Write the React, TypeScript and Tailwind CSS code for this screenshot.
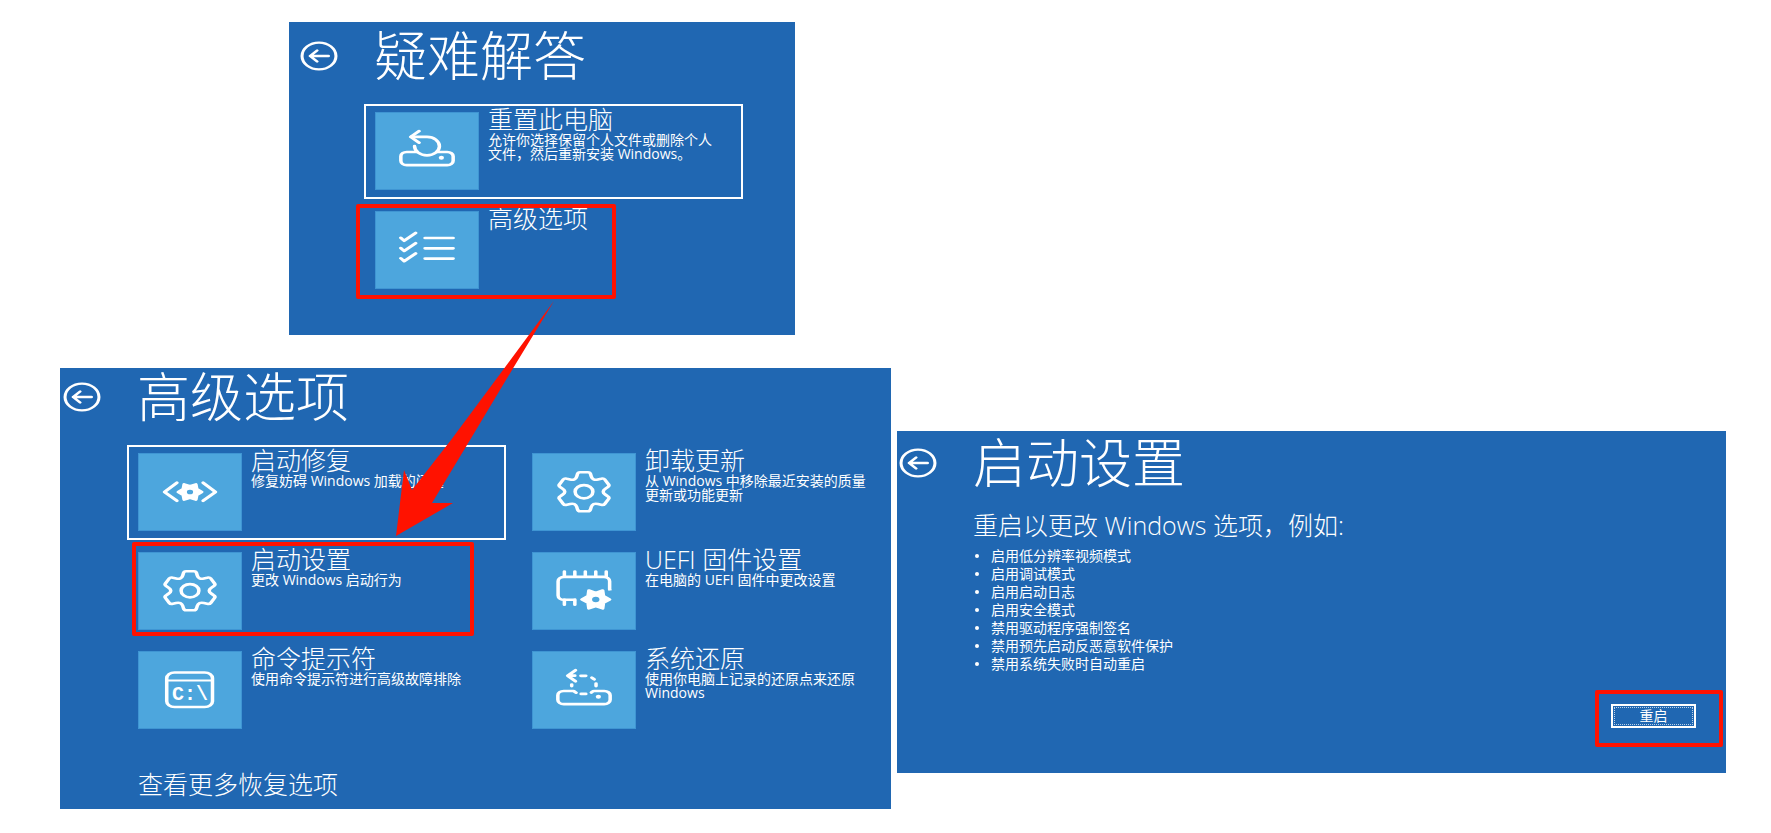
import type { ReactNode } from 'react';

interface TileProps {
  title: string;
  description?: string;
  icon: ReactNode;
  selected?: boolean;
  children?: ReactNode;
}

interface PanelHeaderProps {
  title: string;
}

// Outline of a six-tooth gear with rounded corners
const gearOutline = (cx: number, cy: number) => {
  const at = (x: number, y: number, turn: number) => {
    const a = (turn * Math.PI) / 3;
    const px = cx + x * Math.cos(a) - y * Math.sin(a);
    const py = cy + x * Math.sin(a) + y * Math.cos(a);
    return `${px.toFixed(2)} ${py.toFixed(2)}`;
  };
  let d = `M${at(-3, -20, 0)}`;
  for (let i = 0; i < 6; i++) {
    d += `L${at(3, -20, i)}Q${at(4.7, -20, i)} ${at(5, -18, i)}`;
    d += `L${at(5.6, -15.5, i)}Q${at(6.6, -11.4, i)} ${at(-5.6, -15.5, i + 1)}`;
    d += `L${at(-5, -18, i + 1)}Q${at(-4.7, -20, i + 1)} ${at(-3, -20, i + 1)}`;
  }
  return `${d}Z`;
};

// Solid star-like gear, teeth pointing sideways
const gearPoints = (cx: number, cy: number, outer: number, inner: number) =>
  Array.from({ length: 12 }, (_, i) => {
    const a = (i * Math.PI) / 6;
    const r = i % 2 === 0 ? outer : inner;
    return `${(cx + r * Math.cos(a)).toFixed(2)},${(cy + r * Math.sin(a)).toFixed(2)}`;
  }).join(' ');

const IconCanvas = ({ children }: { children: ReactNode }) => (
  <svg
    viewBox="0 0 78 78"
    preserveAspectRatio="none"
    className="h-full w-full"
    fill="none"
    stroke="white"
    strokeWidth="2.7"
    strokeLinecap="round"
    strokeLinejoin="round"
    aria-hidden="true"
  >
    {children}
  </svg>
);

const DRIVE_PATH =
  'M47 40H54.5A4.5 4.5 0 0 1 59 44.5V49A4.5 4.5 0 0 1 54.5 53.5H23.5A4.5 4.5 0 0 1 19 49V44.5A4.5 4.5 0 0 1 23.5 40H31';

const ResetIcon = () => (
  <IconCanvas>
    <path d={DRIVE_PATH} />
    <path d="M27 24.5H39A9.5 9.5 0 1 1 29.5 34" />
    <path d="M33 18.5L26.5 24.5L33 30.5" />
    <circle cx="50" cy="46" r="2" fill="white" stroke="none" />
  </IconCanvas>
);

const RestoreIcon = () => (
  <IconCanvas>
    <path d={DRIVE_PATH} />
    <path d="M36.6 24.5H40.4M45 26.4L46.8 28M48.2 32.4V35M46 40.2L44.6 41.6M36.8 43H40.4M31.4 40.4L33 41.8M29.6 35V33.4" />
    <path d="M32.5 18.7L26.5 24.3L32.5 30M27 24.3H32" />
    <circle cx="50" cy="46" r="2" fill="white" stroke="none" />
  </IconCanvas>
);

const ChecklistIcon = () => (
  <IconCanvas>
    <path d="M19 26.5L21.5 29.5L30.3 21.5M19 37L21.5 40L30.3 32M19 47.5L21.5 50.5L30.3 42.5" />
    <path d="M37.5 26.7H59M37.5 37.3H59M37.5 47.8H59" />
  </IconCanvas>
);

const RepairIcon = () => (
  <IconCanvas>
    <path d="M29 29.5L19.5 39L29 48M49 29.5L58.5 39L49 48" />
    <polygon points={gearPoints(39, 39, 9, 6)} fill="white" />
    <circle cx="39" cy="39" r="2.4" fill="#4da6dd" stroke="none" />
  </IconCanvas>
);

const GearIcon = () => (
  <IconCanvas>
    <path d={gearOutline(39, 38.7)} />
    <circle cx="39" cy="38.7" r="6.8" />
  </IconCanvas>
);

const FirmwareIcon = () => (
  <IconCanvas>
    <path
      strokeLinecap="butt"
      d="M59 38.5L58.6 37V29A4.5 4.5 0 0 0 54.1 24.5H23.7A4.5 4.5 0 0 0 19.2 29V43.5A4.5 4.5 0 0 0 23.7 48H33"
    />
    <path d="M24 19V24M32 19V24M40 19V24M48 19V24M56 19V24M24 48V53M32 48V53" />
    <polygon points={gearPoints(48, 47.7, 10.6, 6.8)} fill="white" />
    <circle cx="48" cy="47.7" r="2.8" fill="#4da6dd" stroke="none" />
  </IconCanvas>
);

const CommandIcon = () => (
  <>
    <IconCanvas>
      <rect x="21.2" y="21" width="35" height="35.5" rx="6" />
      <path d="M21.2 29.2H56.2" strokeWidth="2.2" />
    </IconCanvas>
    <span className="absolute inset-x-0 top-[33px] text-center font-['Liberation_Mono',monospace] text-xl leading-5 font-bold">
      C:\
    </span>
  </>
);

const Highlight = ({ className }: { className: string }) => (
  <span
    className={`pointer-events-none absolute rounded-xs border-4 border-[#ff1200] ${className}`}
  />
);

const PanelHeader = ({ title }: PanelHeaderProps) => (
  <header className="flex h-[52px] items-center gap-9">
    <button type="button" aria-label="返回" className="h-[30px] w-[38px] shrink-0">
      <svg
        viewBox="0 0 30 30"
        preserveAspectRatio="none"
        className="h-full w-full"
        fill="none"
        stroke="white"
        strokeWidth="2.4"
        strokeLinecap="round"
        strokeLinejoin="round"
      >
        <circle cx="15" cy="15" r="13.4" />
        <path d="M22.5 15H8M13.5 9.5L8 15L13.5 20.5" />
      </svg>
    </button>
    <h1 className="text-[53px] leading-[50px] font-light whitespace-nowrap">{title}</h1>
  </header>
);

const Tile = ({ title, description, icon, selected, children }: TileProps) => (
  <button
    type="button"
    className={`relative flex h-[95px] w-full max-w-[379px] items-start gap-[9px] border-2 pt-px pl-[9px] text-left ${selected ? 'border-white' : 'border-transparent'}`}
  >
    <span className="relative mt-[5px] block h-[78px] w-[104px] shrink-0 border border-[#3f95d3] bg-[#4da6dd]">
      {icon}
    </span>
    <span className="block w-[232px] shrink-0">
      <span className="block text-[25px] leading-6 font-light whitespace-nowrap">{title}</span>
      {description && (
        <span className="mt-[2px] block text-sm leading-[14px]">{description}</span>
      )}
    </span>
    {children}
  </button>
);

const STARTUP_OPTIONS = [
  '启用低分辨率视频模式',
  '启用调试模式',
  '启用启动日志',
  '启用安全模式',
  '禁用驱动程序强制签名',
  '禁用预先启动反恶意软件保护',
  '禁用系统失败时自动重启',
];

const TroubleshootPanel = () => (
  <section className="ml-[289px] w-full max-w-[506px] bg-[#2067b2] pt-2 pb-[37px] pl-[11px]">
    <PanelHeader title="疑难解答" />
    <div className="mt-[22px] ml-16 flex flex-col gap-1">
      <Tile
        title="重置此电脑"
        description="允许你选择保留个人文件或删除个人文件，然后重新安装 Windows。"
        icon={<ResetIcon />}
        selected
      />
      <Tile title="高级选项" icon={<ChecklistIcon />}>
        <Highlight className="-top-px -left-[10px] h-[95px] w-[260px]" />
      </Tile>
    </div>
  </section>
);

const AdvancedPanel = () => (
  <section className="bg-[#2067b2] pt-[3px] pb-[13px] pl-[3px]">
    <PanelHeader title="高级选项" />
    <div className="mt-[22px] ml-16 grid grid-cols-[379px_1fr] gap-x-[15px] gap-y-1">
      <Tile
        title="启动修复"
        description="修复妨碍 Windows 加载的问题"
        icon={<RepairIcon />}
        selected
      />
      <Tile
        title="卸载更新"
        description="从 Windows 中移除最近安装的质量更新或功能更新"
        icon={<GearIcon />}
      />
      <Tile title="启动设置" description="更改 Windows 启动行为" icon={<GearIcon />}>
        <Highlight className="-top-1 left-[3px] h-[94px] w-[342px]" />
      </Tile>
      <Tile
        title="UEFI 固件设置"
        description="在电脑的 UEFI 固件中更改设置"
        icon={<FirmwareIcon />}
      />
      <Tile
        title="命令提示符"
        description="使用命令提示符进行高级故障排除"
        icon={<CommandIcon />}
      />
      <Tile
        title="系统还原"
        description="使用你电脑上记录的还原点来还原 Windows"
        icon={<RestoreIcon />}
      />
    </div>
    <a href="#more" className="mt-[34px] ml-[75px] block w-fit text-[25px] leading-6 font-light">
      查看更多恢复选项
    </a>
  </section>
);

const StartupPanel = () => (
  <section className="mt-[63px] bg-[#2067b2] pt-[6px] pr-[3px] pb-[26px] pl-[2px]">
    <PanelHeader title="启动设置" />
    <div className="mt-6 ml-[74px]">
      <h2 className="text-[25px] leading-6 font-light">重启以更改 Windows 选项，例如:</h2>
      <ul className="mt-[10px] text-sm leading-[18px]">
        {STARTUP_OPTIONS.map((option) => (
          <li key={option} className="flex items-center gap-3">
            <span className="ml-[2px] size-1 rounded-full bg-white" />
            {option}
          </li>
        ))}
      </ul>
    </div>
    <div className="mt-[17px] ml-auto h-[57px] w-[128px] rounded-xs border-4 border-[#ff1200] pt-[10px] pl-3">
      <button
        type="button"
        className="block h-6 w-[85px] border-2 border-white p-px text-sm leading-4"
      >
        <span className="block h-full border border-dotted border-white/70">重启</span>
      </button>
    </div>
  </section>
);

export default function App() {
  return (
    <main className="relative min-h-screen bg-white pt-[22px] pb-6 font-['Open_Sans','Noto_Sans_CJK_SC',sans-serif] text-white">
      <TroubleshootPanel />
      <div className="mt-[33px] grid grid-cols-[831fr_829fr] items-start gap-[6px] pr-[45px] pl-[60px]">
        <AdvancedPanel />
        <StartupPanel />
      </div>
      <svg
        className="pointer-events-none absolute top-[300px] left-[394px] h-[238px] w-[162px]"
        viewBox="394 300 162 238"
        fill="#ff1200"
        aria-hidden="true"
      >
        <path d="M554 301L503 370L451 440L412 490L404 470L396 536L453 503H432L470 440L512 370Z" />
      </svg>
    </main>
  );
}
